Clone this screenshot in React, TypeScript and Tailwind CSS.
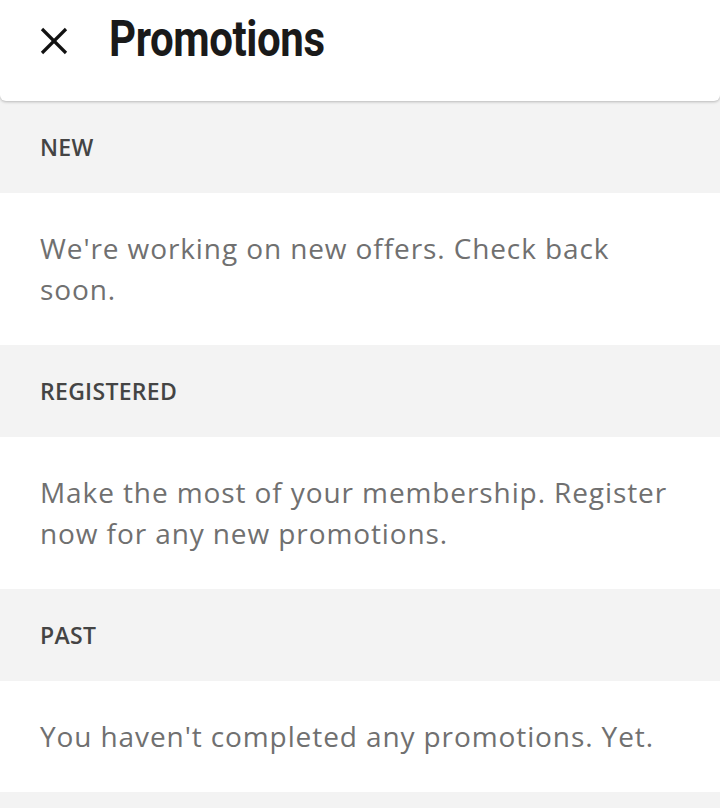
import React from "react";

const sections = [
  { label: "NEW", text: "We're working on new offers. Check back soon." },
  { label: "REGISTERED", text: "Make the most of your membership. Register now for any new promotions." },
  { label: "PAST", text: "You haven't completed any promotions. Yet." },
];

export default function App() {
  return (
    <div className="w-[720px] h-[808px] overflow-hidden bg-[#f3f3f3]" style={{ fontFamily: "'Open Sans', sans-serif" }}>
      {/* header */}
      <div className="relative z-10 h-[101px] bg-white rounded-b-[6px] shadow-[0_1px_3px_rgba(0,0,0,0.25)] flex items-start pt-[9px]">
        <button className="ml-[38px] mt-[16px] w-[32px] h-[32px] flex items-center justify-center">
          <svg width="30" height="30" viewBox="0 0 30 30" fill="none" stroke="#111" strokeWidth="3.2" strokeLinecap="butt">
            <line x1="3" y1="3" x2="27" y2="27" />
            <line x1="27" y1="3" x2="3" y2="27" />
          </svg>
        </button>
        <h1
          className="ml-[39px] text-[50px] leading-[60px] font-bold text-[#1a1a1a] origin-left scale-x-[0.84] tracking-[-0.5px]"
          style={{ fontFamily: "Roboto, sans-serif" }}
        >
          Promotions
        </h1>
      </div>

      {sections.map((s) => (
        <div key={s.label}>
          <div className="h-[92px] flex items-center px-[40px] bg-[#f3f3f3]">
            <span className="text-[23px] font-semibold text-[#444] tracking-[0.3px]">{s.label}</span>
          </div>
          <div className="bg-white pl-[40px] pr-[40px] py-[35px]">
            <p className="text-[28px] leading-[41px] text-[#707070] tracking-[0.9px]">{s.text}</p>
          </div>
        </div>
      ))}
    </div>
  );
}
